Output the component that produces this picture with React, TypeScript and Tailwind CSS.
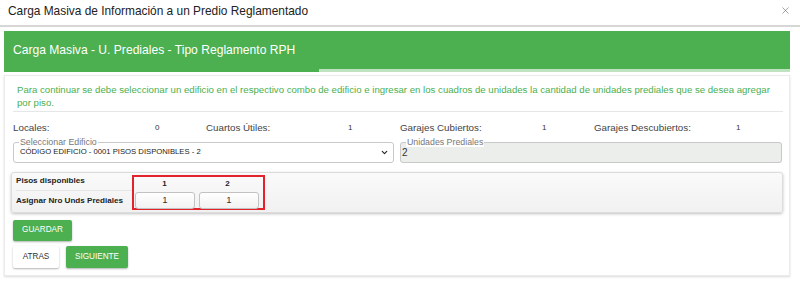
import { X, ChevronDown } from 'lucide-react';

const stats = [
  { label: 'Locales:', value: '0' },
  { label: 'Cuartos Útiles:', value: '1' },
  { label: 'Garajes Cubiertos:', value: '1' },
  { label: 'Garajes Descubiertos:', value: '1' },
];

const floors = [
  { floor: '1', units: '1' },
  { floor: '2', units: '1' },
];

export default function App() {
  return (
    <div className="h-[281px] w-[800px] overflow-hidden bg-white font-['Liberation_Sans',Arial,sans-serif] text-[#333]">
      {/* modal title */}
      <div className="flex h-[27px] items-center justify-between border-b-2 border-[#d6d6d6] pl-[8px] pr-[9px]">
        <h1 className="pb-[2px] text-[11.9px] text-[#222]">
          Carga Masiva de Información a un Predio Reglamentado
        </h1>
        <X size={11} strokeWidth={1.3} className="mb-[5px] text-[#666]" />
      </div>

      <div className="pl-[4px] pr-[10px] pt-[4px]">
        {/* green header */}
        <div className="flex h-[41px] flex-col bg-[#4caf50]">
          <div className="flex flex-1 items-center pl-[9px] text-[12.1px] text-white">
            Carga Masiva - U. Prediales - Tipo Reglamento RPH
          </div>
          <div className="flex h-[3px]">
            <div className="w-[315px]" />
            <div className="flex-1 bg-[#bfe3c1]" />
          </div>
        </div>

        {/* body panel */}
        <div className="mt-[3px] h-[201px] border border-[#ebebeb] pb-[7px] pl-[8px] pr-[6px] pt-[7px] shadow-[0_1px_2px_rgba(0,0,0,0.15)]">
          <p className="pl-[4px] text-[9.65px] leading-[13px] text-[#4caf50]">
            Para continuar se debe seleccionar un edificio en el respectivo combo de edificio e ingresar en los cuadros de unidades la cantidad de unidades prediales que se desea agregar por piso.
          </p>
          <div className="mt-[2px] border-t border-[#e6e6e6]" />

          {/* counters */}
          <div className="mt-[8px] grid h-[16px] grid-cols-[193px_194px_194px_1fr] items-center">
            {stats.map(({ label, value }) => (
              <div key={label} className="flex items-center">
                <span className="w-[142px] text-[9.8px] text-[#444]">{label}</span>
                <span className="text-[8px] text-[#333]">{value}</span>
              </div>
            ))}
          </div>

          {/* selects */}
          <div className="mt-[1px] flex gap-[6px]">
            <fieldset className="h-[26px] w-[381px] rounded-[3px] border border-[#c9c9c9] px-[5px]">
              <legend className="px-[1px] text-[8.8px] leading-[10px] text-[#777]">
                Seleccionar Edificio
              </legend>
              <div className="flex h-[10px] items-center justify-between pl-[1px]">
                <span className="text-[7.7px] text-[#222]">
                  CÓDIGO EDIFICIO - 0001 PISOS DISPONIBLES - 2
                </span>
                <ChevronDown size={9} strokeWidth={3} className="mr-[-1px] text-[#222]" />
              </div>
            </fieldset>
            <fieldset className="h-[26px] w-[382px] rounded-[3px] border border-[#c9c9c9] bg-[#eceeec] px-[5px]">
              <legend className="bg-white px-[1px] text-[8.8px] leading-[10px] text-[#777]">
                Unidades Prediales
              </legend>
              <div className="-ml-[4px] flex h-[11px] items-center text-[10px] text-[#333]">2</div>
            </fieldset>
          </div>

          {/* floors table */}
          <div className="ml-[-2px] mt-[9px] flex h-[41px] w-[772px] rounded-[3px] border border-[#dcdcdc] bg-gradient-to-b from-[#fafafa] to-[#f1f1f1] shadow-[0_1px_3px_rgba(0,0,0,0.25)]">
            <div className="flex w-[120px] flex-col pl-[4px] text-[8.1px] font-bold text-[#222]">
              <div className="flex h-[18px] items-center border-b border-[#e6e6e6]">Pisos disponibles</div>
              <div className="flex flex-1 items-center">Asignar Nro Unds Prediales</div>
            </div>
            <div className="mt-[2px] h-[35px] w-[133px] border-2 border-[#e3232b] pl-[1px]">
              <div className="flex h-[14px] items-center gap-[4px]">
                {floors.map(({ floor }) => (
                  <span key={floor} className="w-[59px] text-center text-[8px] font-bold text-[#222]">
                    {floor}
                  </span>
                ))}
              </div>
              <div className="mt-[1px] flex gap-[4px]">
                {floors.map(({ floor, units }) => (
                  <div
                    key={floor}
                    className="flex h-[17px] w-[60px] items-center justify-center rounded-[3px] border border-[#c2c2c2] bg-gradient-to-b from-white to-[#f2f2f2] text-[9.5px] text-[#333]"
                  >
                    {units}
                  </div>
                ))}
              </div>
            </div>
          </div>

          {/* actions */}
          <button className="mt-[7px] flex h-[21px] w-[59px] items-center justify-center rounded-[2px] bg-[#4caf50] text-[8.2px] text-white shadow-[0_1px_2px_rgba(0,0,0,0.3)]">
            GUARDAR
          </button>
          <div className="mt-[5px] flex gap-[7px]">
            <button className="flex h-[22px] w-[46px] items-center justify-center rounded-[2px] bg-white text-[8.2px] text-[#333] shadow-[0_1px_2px_rgba(0,0,0,0.3)]">
              ATRAS
            </button>
            <button className="flex h-[22px] w-[62px] items-center justify-center rounded-[2px] bg-[#4caf50] text-[8.2px] text-white shadow-[0_1px_2px_rgba(0,0,0,0.3)]">
              SIGUIENTE
            </button>
          </div>
        </div>
      </div>
    </div>
  );
}
